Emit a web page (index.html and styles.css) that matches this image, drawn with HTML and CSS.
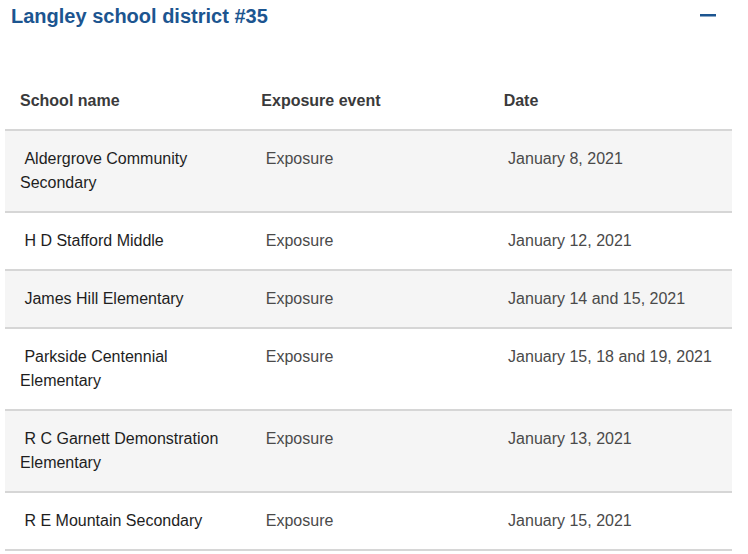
FILE: index.html
```html
<!DOCTYPE html>
<html lang="en">
<head>
<meta charset="utf-8">
<title>Langley school district #35</title>
<link rel="stylesheet" href="styles.css">
</head>
<body>
<section class="panel">
  <div class="panel-head">
    <h2 class="panel-title">Langley school district #35</h2>
    <button class="toggle" aria-label="Collapse">
      <svg width="16" height="3" viewBox="0 0 16 3"><rect x="0" y="0" width="16" height="2.5" fill="#1c5590"/></svg>
    </button>
  </div>
  <table class="exposures">
    <thead>
      <tr><th>School name</th><th>Exposure event</th><th>Date</th></tr>
    </thead>
    <tbody>
      <tr class="alt"><td class="name">&nbsp;Aldergrove Community Secondary</td><td>&nbsp;Exposure</td><td>&nbsp;January 8, 2021</td></tr>
      <tr><td class="name">&nbsp;H D Stafford Middle</td><td>&nbsp;Exposure</td><td>&nbsp;January 12, 2021</td></tr>
      <tr class="alt"><td class="name">&nbsp;James Hill Elementary</td><td>&nbsp;Exposure</td><td>&nbsp;January 14 and 15, 2021</td></tr>
      <tr><td class="name">&nbsp;Parkside Centennial Elementary</td><td>&nbsp;Exposure</td><td>&nbsp;January 15, 18 and 19, 2021</td></tr>
      <tr class="alt"><td class="name">&nbsp;R C Garnett Demonstration Elementary</td><td>&nbsp;Exposure</td><td>&nbsp;January 13, 2021</td></tr>
      <tr><td class="name">&nbsp;R E Mountain Secondary</td><td>&nbsp;Exposure</td><td>&nbsp;January 15, 2021</td></tr>
    </tbody>
  </table>
</section>
</body>
</html>
```
FILE: styles.css
```css
html, body {
  margin: 0;
  padding: 0;
  background: #ffffff;
}
body {
  font-family: "Liberation Sans", Arial, sans-serif;
}
.panel {
  width: 727px;
  margin-left: 5px;
}
.panel-head {
  display: flex;
  justify-content: space-between;
  align-items: flex-start;
  padding: 4px 16px 0 6px;
}
.panel-title {
  margin: 0;
  font-size: 20px;
  line-height: 24px;
  font-weight: bold;
  color: #1c5590;
}
.toggle {
  border: 0;
  background: none;
  padding: 0;
  margin: 10px 0 0 0;
  width: 16px;
  height: 3px;
  display: flex;
  cursor: pointer;
}
.toggle svg {
  display: block;
}
.exposures {
  width: 727px;
  margin-top: 45px;
  table-layout: fixed;
  border-collapse: separate;
  border-spacing: 0;
  font-size: 16px;
  line-height: 24px;
}
.exposures th,
.exposures td {
  text-align: left;
  vertical-align: top;
  padding: 16px 15px 16px 14px;
  border-bottom: 2px solid #d6d6d6;
}
.exposures th:first-child,
.exposures td:first-child {
  padding-left: 15px;
}
.exposures th {
  font-weight: bold;
  color: #3a3a3b;
}
.exposures td {
  color: #4a4a4a;
}
.exposures td.name {
  color: #1e1e1e;
}
.exposures tr.alt td {
  background: #f5f5f5;
}
```
